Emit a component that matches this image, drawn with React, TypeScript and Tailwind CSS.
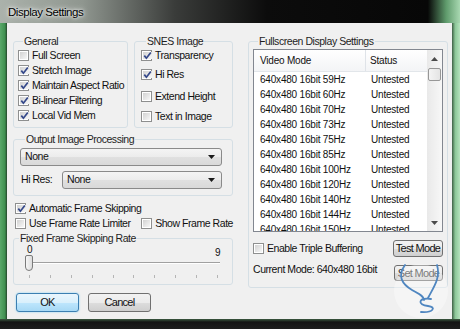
import React from "react";

const modes = [59, 60, 70, 73, 75, 85, 100, 120, 140, 144, 150];
const ticks = [0, 1, 2, 3, 4, 5, 6, 7, 8, 9];

function Check({ on }: { on?: boolean }) {
  return (
    <span className="flex w-[11px] h-[11px] shrink-0 border border-[#8e8f8f] bg-white p-[1px]">
      <span className="flex flex-1 items-center justify-center bg-[linear-gradient(135deg,#d2d2d2,#f7f7f7)]">
        {on && (
          <svg width="9" height="9" viewBox="0 0 9 9">
            <path d="M1.3 4.6 L3.4 7.2 L7.8 1.4" fill="none" stroke="#34488a" strokeWidth="1.7" />
          </svg>
        )}
      </span>
    </span>
  );
}

function CheckRow({ on, label, className = "" }: { on?: boolean; label: string; className?: string }) {
  return (
    <div className={`flex items-center gap-[3px] h-[15px] ${className}`}>
      <Check on={on} />
      <span className="whitespace-nowrap">{label}</span>
    </div>
  );
}

function Group({ title, className = "", children }: { title: string; className?: string; children?: React.ReactNode }) {
  return (
    <fieldset className={`border border-[#d5dfe5] rounded-[3px] ${className}`}>
      <legend className="ml-[5px] px-[1px] leading-[14px] text-[#1e1e1e]">{title}</legend>
      {children}
    </fieldset>
  );
}

function Btn({ label, className = "", ok }: { label: string; className?: string; ok?: boolean }) {
  return (
    <div
      className={`flex items-center justify-center rounded-[3px] border text-[11px] tracking-[-0.7px] ${
        ok
          ? "border-[#3c7fb1] bg-[linear-gradient(180deg,#eaf6fd,#d9f0fc_50%,#bee6fd_51%,#a7d9f5)] shadow-[0_0_2px_#7fd0f5]"
          : "border-[#707070] bg-[linear-gradient(180deg,#f2f2f2,#ebebeb_50%,#dddddd_51%,#cfcfcf)]"
      } ${className}`}
    >
      {label}
    </div>
  );
}

function Select({ className = "" }: { className?: string }) {
  return (
    <div className={`flex h-[18px] items-center justify-between rounded-[3px] border border-[#8a8a8a] bg-[linear-gradient(180deg,#f4f4f4,#ececec_50%,#e0e0e0_51%,#d9d9d9)] pl-[4px] pr-[6px] ${className}`}>
      <span>None</span>
      <svg width="7" height="4" viewBox="0 0 7 4">
        <path d="M0 0 H7 L3.5 4 Z" fill="#1a1a1a" />
      </svg>
    </div>
  );
}

export default function App() {
  return (
    <div className="relative w-[460px] h-[329px] flex flex-col overflow-hidden bg-[#111] font-['Liberation_Sans',Arial,sans-serif] text-[10.5px] tracking-[-0.45px] text-[#111]">
      {/* title bar */}
      <div className="h-[23px] flex items-center pl-[8px] pt-[2px] bg-[linear-gradient(90deg,#abb2ab_0%,#8f968f_18%,#3a3c3a_38%,#0c0c0c_58%,#070707_93%,#5f9b6c_97%,#a8d8b1_100%)]">
        <span className="text-[11.5px] tracking-[-0.45px] text-black [text-shadow:0_0_6px_#fff,0_0_3px_#fff]">Display Settings</span>
      </div>

      <div className="flex flex-1">
        <div className="w-[7px] bg-[linear-gradient(90deg,#5aa86a,#3f9050_70%,#24452b)]" />

        {/* client */}
        <div className="flex-1 flex gap-[15px] bg-[#f0f0f0] pt-[11px] pl-[6px] pr-[4px]">
          {/* left column */}
          <div className="w-[220px] flex flex-col">
            <div className="flex gap-[6px]">
              <Group title="General" className="w-[115px] h-[94px] pl-[4px]">
                <div className="flex flex-col">
                  <CheckRow label="Full Screen" className="h-[15.5px]" />
                  <CheckRow on label="Stretch Image" className="h-[15.5px]" />
                  <CheckRow on label="Maintain Aspect Ratio" className="h-[15.5px]" />
                  <CheckRow on label="Bi-linear Filtering" className="h-[15.5px]" />
                  <CheckRow on label="Local Vid Mem" className="h-[15.5px]" />
                </div>
              </Group>
              <Group title="SNES Image" className="w-[99px] h-[94px] pl-[6px]">
                <CheckRow on label="Transparency" />
                <CheckRow on label="Hi Res" className="mt-[4px]" />
                <CheckRow label="Extend Height" className="mt-[7px]" />
                <CheckRow label="Text in Image" className="mt-[5px]" />
              </Group>
            </div>

            <Group title="Output Image Processing" className="mt-[4px] pl-[6px] pr-[10px] pb-[6px]">
              <Select className="mt-[2px]" />
              <div className="mt-[5px] flex items-center">
                <span className="w-[42px] pl-[1px]">Hi Res:</span>
                <Select className="flex-1" />
              </div>
            </Group>

            <CheckRow on label="Automatic Frame Skipping" className="mt-[5px] ml-[2px]" />
            <div className="flex">
              <CheckRow label="Use Frame Rate Limiter" className="ml-[2px] w-[127px]" />
              <CheckRow label="Show Frame Rate" />
            </div>

            <Group title="Fixed Frame Skipping Rate" className="pb-[6px]">
              <div className="flex justify-between h-[10px] leading-[10px] pl-[13px] pr-[12px] text-[10px]">
                <span>0</span>
                <span className="mt-[3px]">9</span>
              </div>
              <div className="relative h-[16px] ml-[14px] mr-[12px]">
                <div className="absolute left-0 right-0 top-[7px] h-[2px] border-t border-[#a0a0a0] border-b border-b-white bg-[#e6e6e6]" />
                <div className="absolute left-[-3px] top-0 w-[8px] h-[16px] rounded-b-[4px] rounded-t-[2px] border border-[#7a7a7a] bg-[linear-gradient(90deg,#f6f6f6,#dcdcdc)]" />
              </div>
              <div className="mt-[4px] h-[3px] flex justify-between pl-[15px] pr-[14px]">
                {ticks.map((t) => (
                  <span key={t} className="w-[1px] h-[3px] bg-[#b5b5b5]" />
                ))}
              </div>
            </Group>

            <div className="mt-[8px] flex gap-[9px] ml-[3px]">
              <Btn ok label="OK" className="w-[63px] h-[19px]" />
              <Btn label="Cancel" className="w-[63px] h-[19px]" />
            </div>
          </div>

          {/* right column */}
          <Group title="Fullscreen Display Settings" className="w-[200px] h-[254px] px-[4px] pb-[6px]">
            <div className="mt-[1px] h-[183px] flex border border-[#828790] bg-white text-[10px] tracking-[-0.2px]">
              <div className="flex-1 flex flex-col overflow-hidden">
                <div className="h-[22px] shrink-0 flex border-b border-[#e2e6ea] bg-[linear-gradient(180deg,#ffffff,#f3f4f6)]">
                  <div className="w-[112px] flex items-center pl-[6px] border-r border-[#dfe3e8]">Video Mode</div>
                  <div className="flex-1 flex items-center pl-[4px]">Status</div>
                </div>
                {modes.map((m) => (
                  <div key={m} className="h-[15px] shrink-0 flex leading-[15px]">
                    <div className="w-[112px] pl-[6px] whitespace-nowrap">640x480 16bit {m}Hz</div>
                    <div className="pl-[5px]">Untested</div>
                  </div>
                ))}
              </div>
              <div className="w-[15px] flex flex-col bg-[linear-gradient(90deg,#e9e9e9,#f7f7f7)]">
                <div className="h-[17px] shrink-0 flex items-center justify-center">
                  <svg width="7" height="4" viewBox="0 0 7 4">
                    <path d="M0 4 L3.5 0 L7 4 Z" fill="#4a4a4a" />
                  </svg>
                </div>
                <div className="mx-[1px] mt-[1px] h-[13px] shrink-0 rounded-[2px] border border-[#979797] bg-[linear-gradient(90deg,#f4f4f4,#e4e4e4)]" />
                <div className="flex-1" />
                <div className="h-[17px] shrink-0 flex items-center justify-center">
                  <svg width="7" height="4" viewBox="0 0 7 4">
                    <path d="M0 0 H7 L3.5 4 Z" fill="#4a4a4a" />
                  </svg>
                </div>
              </div>
            </div>

            <div className="mt-[8px] h-[17px] flex items-center justify-between">
              <CheckRow label="Enable Triple Buffering" />
              <Btn label="Test Mode" className="w-[50px] h-[17px]" />
            </div>
            <div className="mt-[8px] h-[16px] flex items-start justify-between">
              <span className="mt-[-3px] leading-[14px]">Current Mode: 640x480 16bit</span>
              <Btn label="Set Mode" className="w-[49px] h-[16px] text-[#333]" />
            </div>
          </Group>
        </div>

        <div className="w-[8px] bg-[linear-gradient(90deg,#3d5f44,#8cc798_40%,#b5e2bd)]" />
      </div>

      <div className="h-[10px] bg-[linear-gradient(180deg,#3b5a40_0%,#141414_30%,#1d1d1d_100%)]" />

      {/* watermark */}
      <svg className="absolute left-0 top-0 pointer-events-none" width="460" height="329" viewBox="0 0 460 329">
        <circle cx="421" cy="291" r="27" fill="#ffffff" opacity="0.35" />
        <path d="M405 265 C397 276 402 284 412 290 C419 294 424 296 424 300" fill="none" stroke="#4f86c0" strokeWidth="1.8" strokeLinecap="round" />
        <path d="M437 265 C441 278 433 288 428 298" fill="none" stroke="#4f86c0" strokeWidth="1.8" strokeLinecap="round" />
        <path d="M431 299 C418 297 417 305 428 306 C437 307 433 313 421 312" fill="none" stroke="#4f86c0" strokeWidth="1.8" strokeLinecap="round" />
      </svg>
    </div>
  );
}
